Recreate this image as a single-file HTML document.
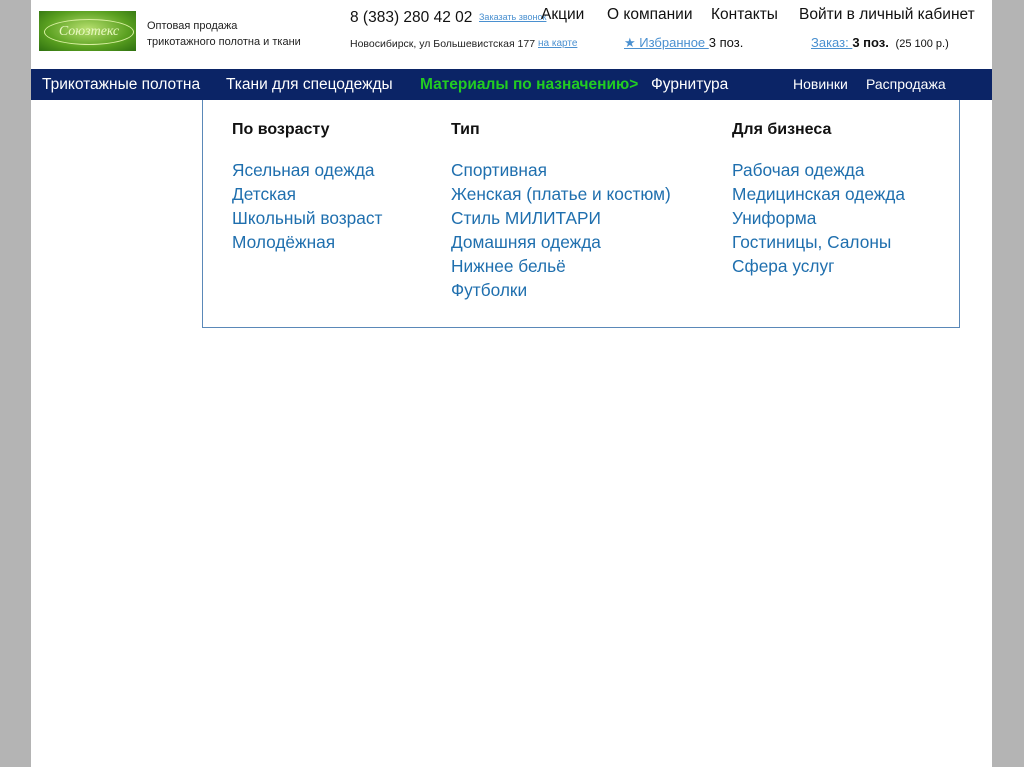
<!DOCTYPE html>
<html><head><meta charset="utf-8"><style>
body{margin:0;width:1024px;height:767px;background:#b4b4b4;font-family:"Liberation Sans","DejaVu Sans",sans-serif;position:relative;overflow:hidden}
.page{position:absolute;left:31px;top:0;width:961px;height:767px;background:#fff}
.a{position:absolute;white-space:nowrap}
.lnk{color:#4a90d0;text-decoration:underline}
.nav{position:absolute;left:31px;top:69px;width:961px;height:31px;background:#0b2466}
.nav span{position:absolute;top:7px;color:#fff;font-size:15.5px}
.dd{position:absolute;left:202px;top:100px;width:756px;height:227px;border:1px solid #5a88b8;border-top:none;background:#fff}
.h{position:absolute;font-weight:bold;font-size:16px;color:#111}
.col{position:absolute;font-size:17.3px;color:#1f6fae;line-height:24px}
</style></head><body>
<div class="page"></div>
<div class="a" style="left:39px;top:11px;width:97px;height:40px;background:radial-gradient(ellipse at 50% 45%,#b8e070,#5aa020 60%,#2e7010);"></div>
<div class="a" style="left:44px;top:19px;width:88px;height:24px;border-radius:50%;border:1px solid #d8f0a0;color:#e8f8c0;font-family:'Liberation Serif',serif;font-style:italic;font-size:14px;text-align:center;line-height:24px">Союзтекс</div>
<div class="a" style="left:147px;top:18px;font-size:11px;color:#222;line-height:16px">Оптовая продажа<br>трикотажного полотна и ткани</div>
<div class="a" style="left:350px;top:9px;font-size:15.5px;color:#111">8 (383) 280 42 02</div>
<div class="a lnk" style="left:479px;top:12px;font-size:9px">Заказать звонок</div>
<div class="a" style="left:350px;top:38px;font-size:10.5px;color:#222">Новосибирск, ул Большевистская 177</div>
<div class="a lnk" style="left:538px;top:38px;font-size:10px">на карте</div>
<div class="a" style="left:541px;top:6px;font-size:15.5px;color:#111">Акции</div>
<div class="a" style="left:607px;top:6px;font-size:15.5px;color:#111">О компании</div>
<div class="a" style="left:711px;top:6px;font-size:15.5px;color:#111">Контакты</div>
<div class="a" style="left:799px;top:6px;font-size:15.5px;color:#111">Войти в личный кабинет</div>
<div class="a" style="left:624px;top:35px;font-size:13px"><span class="lnk">★ Избранное </span><span style="color:#111">3 поз.</span></div>
<div class="a" style="left:811px;top:35px;font-size:13px"><span class="lnk">Заказ: </span><b style="color:#111">3 поз.</b> <span style="font-size:11px;color:#111">&nbsp;(25 100 р.)</span></div>
<div class="nav">
<span style="left:11px">Трикотажные полотна</span>
<span style="left:195px">Ткани для спецодежды</span>
<span style="left:389px;color:#22cc22;font-weight:bold">Материалы по назначению&gt;</span>
<span style="left:620px">Фурнитура</span>
<span style="left:762px;font-size:14px">Новинки</span>
<span style="left:835px;font-size:14px">Распродажа</span>
</div>
<div class="dd"></div>
<div class="h" style="left:232px;top:121px">По возрасту</div>
<div class="h" style="left:451px;top:121px">Тип</div>
<div class="h" style="left:732px;top:121px">Для бизнеса</div>
<div class="col" style="left:232px;top:158px">Ясельная одежда<br>Детская<br>Школьный возраст<br>Молодёжная</div>
<div class="col" style="left:451px;top:158px">Спортивная<br>Женская (платье и костюм)<br>Стиль МИЛИТАРИ<br>Домашняя одежда<br>Нижнее бельё<br>Футболки</div>
<div class="col" style="left:732px;top:158px">Рабочая одежда<br>Медицинская одежда<br>Униформа<br>Гостиницы, Салоны<br>Сфера услуг</div>
</body></html>
